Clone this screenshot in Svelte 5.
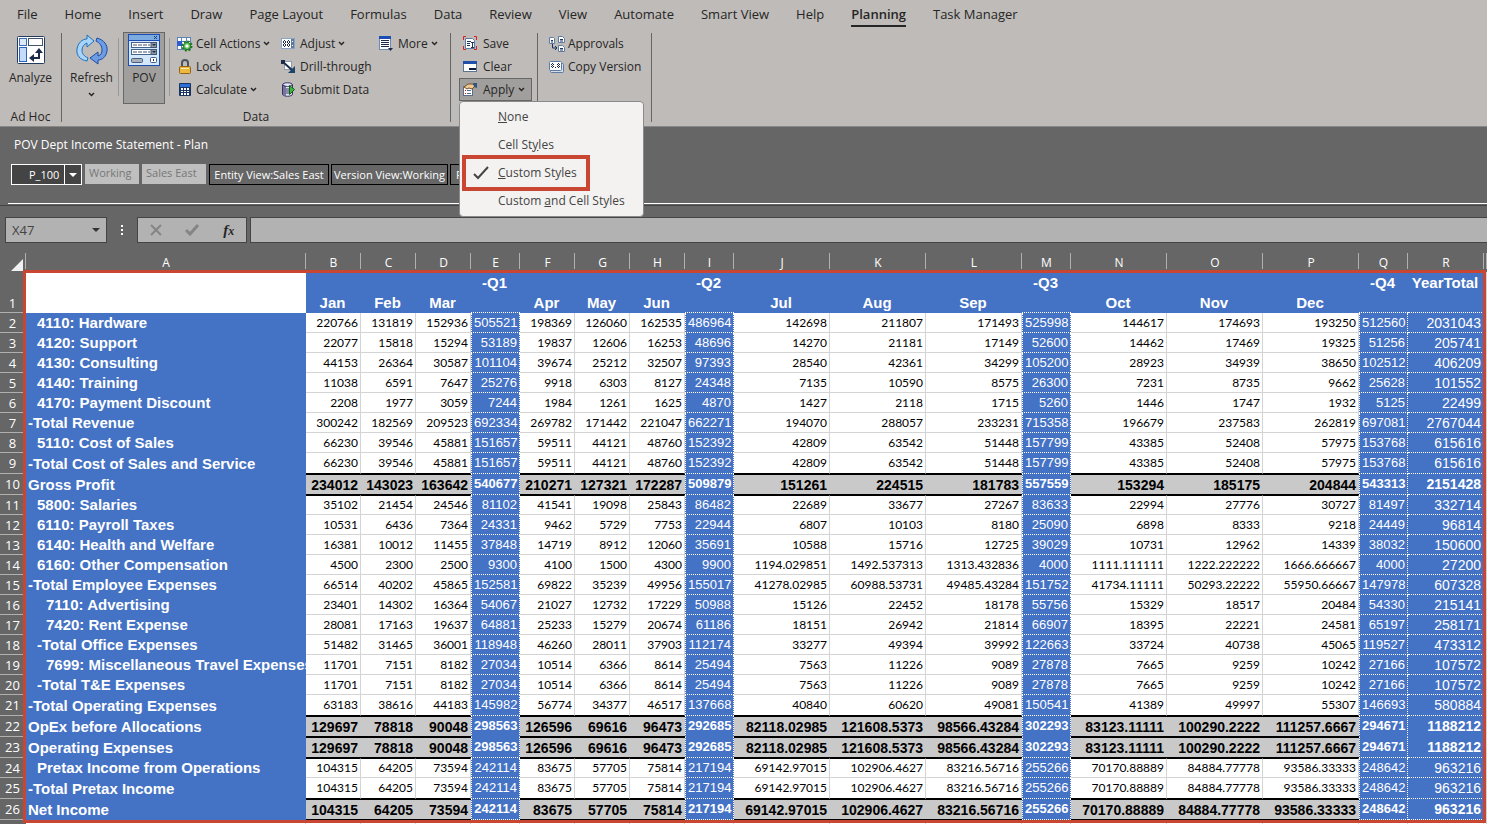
<script>
    const tabs = ['File', 'Home', 'Insert', 'Draw', 'Page Layout', 'Formulas', 'Data', 'Review', 'View', 'Automate', 'Smart View', 'Help', 'Planning', 'Task Manager'];
    let activeTab = 'Planning';
    let style = 'Custom Styles';
    let member = 'P_100';
    let cellRef = 'X47';
    let formula = '';

    const menu = [
        { name: 'None', before: '', key: 'N', after: 'one' },
        { name: 'Cell Styles', before: 'Cell St', key: 'y', after: 'les' },
        { name: 'Custom Styles', before: '', key: 'C', after: 'ustom Styles' },
        { name: 'Custom and Cell Styles', before: 'Custom ', key: 'a', after: 'nd Cell Styles' },
    ];

    const columns = [
        ['B', 'Jan', 'month'], ['C', 'Feb', 'month'], ['D', 'Mar', 'month'], ['E', '-Q1', 'quarter'],
        ['F', 'Apr', 'month'], ['G', 'May', 'month'], ['H', 'Jun', 'month'], ['I', '-Q2', 'quarter'],
        ['J', 'Jul', 'wide'], ['K', 'Aug', 'wide'], ['L', 'Sep', 'wide'], ['M', '-Q3', 'quarter'],
        ['N', 'Oct', 'wide'], ['O', 'Nov', 'wide'], ['P', 'Dec', 'wide'], ['Q', '-Q4', 'quarter'],
        ['R', 'YearTotal', 'year'],
    ].map(([letter, title, kind]) => ({ letter, title, kind }));

    // indent, label, values, and a flag for the highlighted total rows
    const rows = [
        [1, '4110: Hardware', '220766 131819 152936 505521 198369 126060 162535 486964 142698 211807 171493 525998 144617 174693 193250 512560 2031043'],
        [1, '4120: Support', '22077 15818 15294 53189 19837 12606 16253 48696 14270 21181 17149 52600 14462 17469 19325 51256 205741'],
        [1, '4130: Consulting', '44153 26364 30587 101104 39674 25212 32507 97393 28540 42361 34299 105200 28923 34939 38650 102512 406209'],
        [1, '4140: Training', '11038 6591 7647 25276 9918 6303 8127 24348 7135 10590 8575 26300 7231 8735 9662 25628 101552'],
        [1, '4170: Payment Discount', '2208 1977 3059 7244 1984 1261 1625 4870 1427 2118 1715 5260 1446 1747 1932 5125 22499'],
        [0, '-Total Revenue', '300242 182569 209523 692334 269782 171442 221047 662271 194070 288057 233231 715358 196679 237583 262819 697081 2767044'],
        [1, '5110: Cost of Sales', '66230 39546 45881 151657 59511 44121 48760 152392 42809 63542 51448 157799 43385 52408 57975 153768 615616'],
        [0, '-Total Cost of Sales and Service', '66230 39546 45881 151657 59511 44121 48760 152392 42809 63542 51448 157799 43385 52408 57975 153768 615616'],
        [0, 'Gross Profit', '234012 143023 163642 540677 210271 127321 172287 509879 151261 224515 181783 557559 153294 185175 204844 543313 2151428', true],
        [1, '5800: Salaries', '35102 21454 24546 81102 41541 19098 25843 86482 22689 33677 27267 83633 22994 27776 30727 81497 332714'],
        [1, '6110: Payroll Taxes', '10531 6436 7364 24331 9462 5729 7753 22944 6807 10103 8180 25090 6898 8333 9218 24449 96814'],
        [1, '6140: Health and Welfare', '16381 10012 11455 37848 14719 8912 12060 35691 10588 15716 12725 39029 10731 12962 14339 38032 150600'],
        [1, '6160: Other Compensation', '4500 2300 2500 9300 4100 1500 4300 9900 1194.029851 1492.537313 1313.432836 4000 1111.111111 1222.222222 1666.666667 4000 27200'],
        [0, '-Total Employee Expenses', '66514 40202 45865 152581 69822 35239 49956 155017 41278.02985 60988.53731 49485.43284 151752 41734.11111 50293.22222 55950.66667 147978 607328'],
        [2, '7110: Advertising', '23401 14302 16364 54067 21027 12732 17229 50988 15126 22452 18178 55756 15329 18517 20484 54330 215141'],
        [2, '7420: Rent Expense', '28081 17163 19637 64881 25233 15279 20674 61186 18151 26942 21814 66907 18395 22221 24581 65197 258171'],
        [1, '-Total Office Expenses', '51482 31465 36001 118948 46260 28011 37903 112174 33277 49394 39992 122663 33724 40738 45065 119527 473312'],
        [2, '7699: Miscellaneous Travel Expenses', '11701 7151 8182 27034 10514 6366 8614 25494 7563 11226 9089 27878 7665 9259 10242 27166 107572'],
        [1, '-Total T&E Expenses', '11701 7151 8182 27034 10514 6366 8614 25494 7563 11226 9089 27878 7665 9259 10242 27166 107572'],
        [0, '-Total Operating Expenses', '63183 38616 44183 145982 56774 34377 46517 137668 40840 60620 49081 150541 41389 49997 55307 146693 580884'],
        [0, 'OpEx before Allocations', '129697 78818 90048 298563 126596 69616 96473 292685 82118.02985 121608.5373 98566.43284 302293 83123.11111 100290.2222 111257.6667 294671 1188212', true],
        [0, 'Operating Expenses', '129697 78818 90048 298563 126596 69616 96473 292685 82118.02985 121608.5373 98566.43284 302293 83123.11111 100290.2222 111257.6667 294671 1188212', true],
        [1, 'Pretax Income from Operations', '104315 64205 73594 242114 83675 57705 75814 217194 69142.97015 102906.4627 83216.56716 255266 70170.88889 84884.77778 93586.33333 248642 963216'],
        [0, '-Total Pretax Income', '104315 64205 73594 242114 83675 57705 75814 217194 69142.97015 102906.4627 83216.56716 255266 70170.88889 84884.77778 93586.33333 248642 963216'],
        [0, 'Net Income', '104315 64205 73594 242114 83675 57705 75814 217194 69142.97015 102906.4627 83216.56716 255266 70170.88889 84884.77778 93586.33333 248642 963216', true],
    ].map(([indent, label, values, total]) => ({ indent, label, values: values.split(' '), total }));
</script>

<div class="app">
    <header class="ribbon">
        <nav class="tabs">
            {#each tabs as tab}
                <button class="tab" class:active={tab === activeTab} on:click={() => (activeTab = tab)}>{tab}</button>
            {/each}
        </nav>
        <div class="groups">
            <section class="group adhoc">
                <div class="tools">
                    <button class="big">
                        <svg width="32" height="32" viewBox="0 0 32 32">
                            <rect x="2.500" y="2.500" width="27" height="27" rx="1" fill="#fff" stroke="#263a5c" />
                            <rect x="4.500" y="4.500" width="7" height="7" fill="#dce9fb" stroke="#3c6cb8" />
                            <rect x="13.500" y="4.500" width="14" height="7" fill="#fff" stroke="#44546c" />
                            <rect x="4.500" y="13.500" width="7" height="14" fill="#c4dcfa" stroke="#2c62c0" />
                            <path d="M24 17v7h-7" fill="none" stroke="#1c2c48" stroke-width="2" />
                            <path d="M20 19l4-5 4 5zM19 20l-5 4 5 4z" fill="#1c2c48" />
                        </svg>
                        <span>Analyze</span>
                    </button>
                </div>
                <h2>Ad Hoc</h2>
            </section>
            <section class="group data">
                <div class="tools">
                    <button class="big refresh">
                        <svg width="32" height="32" viewBox="0 0 32 32">
                            <path d="M11 27C4 26 0 21 1 15 2 9 6 5 11 5V1l7 6-7 6V9c-3 1-5 4-5 7 0 4 2 6 6 8z" fill="#a8d4f8" stroke="#1c70c0" />
                            <path d="M21 4c7 2 11 7 10 13-1 6-5 9-9 9v4l-8-6 8-6v4c3-1 4-3 4-6 0-4-2-7-6-9z" fill="#6c9ce4" stroke="#1c4ca4" />
                        </svg>
                        <span>Refresh</span>
                        <svg class="caret" width="7" height="5" viewBox="0 0 7 5"><path d="M1 1l2.500 2.500L6 1" /></svg>
                    </button>
                    <i class="line"></i>
                    <button class="big pressed">
                        <svg width="32" height="32" viewBox="0 0 32 32">
                            <rect x=".5" y=".5" width="31" height="31" fill="#d4e8fc" stroke="#1c4cb4" />
                            <path d="M1 1h30v5H1z" fill="#7cacdf" />
                            <path d="M1 6.500h30" stroke="#1c4cb4" />
                            <path d="M26 2l3 3m0-3l-3 3" stroke="#1c3c74" />
                            <rect x="3.500" y="8.500" width="25" height="5" fill="#fff" stroke="#44648c" />
                            <rect x="3.500" y="15.500" width="25" height="5" fill="#fff" stroke="#44648c" />
                            <path d="M23 8.500h5.500v5H23zM23 15.500h5.500v5H23z" fill="#8c98a8" stroke="#44546c" />
                            <path d="M5 11h17M5 18h17" stroke="#44546c" stroke-dasharray="4 1" />
                            <path d="M24 10h4l-2 2zM24 17h4l-2 2z" fill="#1c2c48" />
                            <rect x="3.500" y="24.500" width="11" height="4" rx="1" fill="#a8b0b8" stroke="#445c84" />
                            <rect x="22.500" y="23.500" width="6" height="5" rx="1" fill="#fff" stroke="#445c84" />
                            <path d="M25.500 25v2" stroke="#1c2c48" />
                        </svg>
                        <span>POV</span>
                    </button>
                    <i class="line"></i>
                    <div class="stack first">
                        <button class="small">
                            <svg width="16" height="16" viewBox="0 0 16 16">
                                <rect x=".5" y="1.500" width="13" height="12" fill="#fff" stroke="#5c84b8" />
                                <path d="M4.500 1v13M9.500 1v13M0 5.500h14M0 9.500h14" stroke="#5c84b8" />
                                <path d="M0 5h5v5H0z" fill="#2c5cd0" />
                                <circle cx="10" cy="10" r="4.500" fill="none" stroke="#187818" stroke-width="2" stroke-dasharray="2 1.500" />
                                <circle cx="10" cy="10" r="3.500" fill="#7ccc74" stroke="#187818" />
                                <circle cx="10" cy="10" r="1.500" fill="#fff" />
                            </svg>
                            Cell Actions
                            <svg class="caret" width="7" height="5" viewBox="0 0 7 5"><path d="M1 1l2.500 2.500L6 1" /></svg>
                        </button>
                        <button class="small">
                            <svg width="16" height="16" viewBox="0 0 16 16">
                                <path d="M5 8V4c0-4 6-4 6 0v4" fill="none" stroke="#4c5460" stroke-width="2" />
                                <rect x="2.500" y="7.500" width="11" height="7" rx="1" fill="#ecb840" stroke="#946414" />
                                <path d="M4 9.500h8" stroke="#fcecac" />
                            </svg>
                            Lock
                        </button>
                        <button class="small">
                            <svg width="16" height="16" viewBox="0 0 16 16">
                                <rect x="2" y="1" width="12" height="13" rx="1" fill="#1c3460" />
                                <path d="M3 2h10v3H3z" fill="#2c70dc" />
                                <path d="M4 6h2v2H4zM7 6h2v2H7zM10 6h2v2h-2zM4 9h2v1H4zM7 9h2v1H7zM10 9h2v1h-2zM4 11h2v2H4zM7 11h2v2H7zM10 11h2v2h-2z" fill="#fff" />
                            </svg>
                            Calculate
                            <svg class="caret" width="7" height="5" viewBox="0 0 7 5"><path d="M1 1l2.500 2.500L6 1" /></svg>
                        </button>
                    </div>
                    <div class="stack second">
                        <button class="small">
                            <svg width="16" height="16" viewBox="0 0 16 16">
                                <rect x=".5" y="2.500" width="13" height="10" fill="#fff" stroke="#8ca4c4" />
                                <path d="M10 3h3v9h-3z" fill="#5c7c9c" />
                                <path d="M3 4h1v1H3zM2 5h1v2H2zM4 5h1v2H4zM3 7h1v1H3zM2 8h1v2H2zM4 8h1v2H4zM3 10h1v1H3zM7 4h1v1H7zM6 5h1v2H6zM8 5h1v2H8zM7 7h1v1H7zM6 8h1v2H6zM8 8h1v2H8zM7 10h1v1H7z" fill="#1c2c48" />
                                <path d="M11 5h1v1h-1zM11 9h1v1h-1z" fill="#fff" />
                            </svg>
                            Adjust
                            <svg class="caret" width="7" height="5" viewBox="0 0 7 5"><path d="M1 1l2.500 2.500L6 1" /></svg>
                        </button>
                        <button class="small">
                            <svg width="16" height="16" viewBox="0 0 16 16">
                                <rect x="3.500" y="2.500" width="7" height="8" fill="#fff" stroke="#8c9cb4" />
                                <path d="M0 1h4v4H0z" fill="#1c2c48" />
                                <path d="M2 3l9 8" stroke="#1c2c48" stroke-width="2" />
                                <path d="M14 7v7H7z" fill="#1c4468" />
                            </svg>
                            Drill-through
                        </button>
                        <button class="small">
                            <svg width="16" height="16" viewBox="0 0 16 16">
                                <path d="M1.500 3c0-3 10-3 10 0v9c0 3-10 3-10 0z" fill="#e4e4f0" stroke="#343464" />
                                <path d="M2 3v9c0 1 1 2 3 2V4z" fill="#74749c" />
                                <path d="M2 3c2 2 7 2 9 0M5 7h4M5 9h4M5 11h4" fill="none" stroke="#343464" />
                                <path d="M8.500 3.500l5 4-5 5z" fill="#3cb83c" stroke="#105c18" />
                            </svg>
                            Submit Data
                        </button>
                    </div>
                    <div class="stack third">
                        <button class="small">
                            <svg width="16" height="16" viewBox="0 0 16 16">
                                <rect x=".5" y="1.500" width="11" height="12" fill="#fff" stroke="#6c8cb4" />
                                <path d="M0 0h12v3H0z" fill="#1c4cb4" />
                                <path d="M2 4.500h8M2 6.500h8M2 8.500h8M2 10.500h8" stroke="#1c2c48" />
                                <path d="M9 12h5l-2.500 3z" fill="#1c2c48" />
                            </svg>
                            More
                            <svg class="caret" width="7" height="5" viewBox="0 0 7 5"><path d="M1 1l2.500 2.500L6 1" /></svg>
                        </button>
                    </div>
                </div>
                <h2>Data</h2>
            </section>
            <section class="group styles">
                <div class="tools">
                    <div class="stack">
                        <button class="small">
                            <svg width="16" height="16" viewBox="0 0 16 16">
                                <path d="M2.500 2.500h7l2 2v8h-9z" fill="#fff" stroke="#5c7ca4" />
                                <path d="M4 5.500h4M4 7.500h3M4 9.500h3M8 6.500h3M8 11.500h3M9.500 7v4" stroke="#1c3460" />
                                <path d="M.5 4V.5H3M11 .5h2.500V4M.5 10v3.500H3M11 13.500h2.500V10" fill="none" stroke="#d82020" />
                            </svg>
                            Save
                        </button>
                        <button class="small">
                            <svg width="16" height="16" viewBox="0 0 16 16">
                                <rect x=".5" y="2.500" width="13" height="10" fill="#fff" stroke="#5c7490" />
                                <path d="M0 2h14v3H0z" fill="#2050ac" />
                                <path d="M6 9h7v2H6z" fill="#0c1c3c" />
                            </svg>
                            Clear
                        </button>
                        <div class="dropdown">
                            <button class="small pressed" aria-haspopup="menu">
                                <svg width="16" height="16" viewBox="0 0 16 16">
                                    <rect x=".5" y="4.500" width="9" height="9" fill="#fff" stroke="#5c6c8c" />
                                    <path d="M4 8.500h4M4 11.500h4" stroke="#5c6c8c" />
                                    <path d="M2 8h1v1H2zM2 11h1v1H2z" fill="#d82020" />
                                    <path d="M1 5l4-3h5l2 2-3 3-3-1-2 1z" fill="#f0c890" stroke="#6c5030" />
                                    <path d="M10 1h4v5l-3-1z" fill="#345480" />
                                </svg>
                                Apply
                                <svg class="caret" width="7" height="5" viewBox="0 0 7 5"><path d="M1 1l2.500 2.500L6 1" /></svg>
                            </button>
                            <div class="menu" role="menu">
                                {#each menu as item}
                                    <button class="item" class:checked={item.name === style} role="menuitemradio" aria-checked={item.name === style} on:click={() => (style = item.name)}>
                                        <span class="check">
                                            {#if item.name === style}
                                                <svg width="18" height="14" viewBox="0 0 18 14"><path d="M2 8l4 4L16 1" fill="none" stroke="#444" stroke-width="2" /></svg>
                                            {/if}
                                        </span>
                                        <span>{item.before}<u>{item.key}</u>{item.after}</span>
                                    </button>
                                {/each}
                            </div>
                        </div>
                    </div>
                </div>
            </section>
            <section class="group approvals">
                <div class="tools">
                    <div class="stack">
                        <button class="small">
                            <svg width="16" height="16" viewBox="0 0 16 16">
                                <path d="M.5 1.500h4l1 1v5h-5zM9.500.5h4l2 2v4h-6zM9.500 9.500h4l2 2v4h-6z" fill="#fff" stroke="#5c7ca4" />
                                <path d="M2 4.500h2M2 6h2M11 3.500h3M11 5h3M11 12.500h3M11 14h3M3.500 8v4H8M6 10l2 2-2 2" fill="none" stroke="#1c3460" />
                            </svg>
                            Approvals
                        </button>
                        <button class="small">
                            <svg width="16" height="16" viewBox="0 0 16 16">
                                <rect x="1.500" y="4.500" width="13" height="9" rx="1" fill="#d4dce8" stroke="#5c7ca4" />
                                <rect x=".5" y="2.500" width="12" height="9" rx="1" fill="#fff" stroke="#5c7ca4" />
                                <path d="M3 4h1v1H3zM2 5h1v1H2zM4 5h1v1H4zM3 6h1v1H3zM2 7h1v1H2zM4 7h1v1H4zM3 8h1v1H3zM9 4h1v1H9zM8 5h1v1H8zM10 5h1v1h-1zM9 6h1v1H9zM8 7h1v1H8zM10 7h1v1h-1zM9 8h1v1H9zM6 8h1v1H6z" fill="#1c2c48" />
                            </svg>
                            Copy Version
                        </button>
                    </div>
                </div>
            </section>
        </div>
    </header>

    <section class="pov">
        <h1>POV Dept Income Statement - Plan</h1>
        <div class="members">
            <label class="picker">
                <select bind:value={member} aria-label="Product">
                    <option>P_100</option>
                </select>
                <svg width="8" height="4" viewBox="0 0 8 4"><path d="M0 0h8L4 4z" fill="#fff" /></svg>
            </label>
            <button class="fixed working" disabled>Working</button>
            <button class="fixed east" disabled>Sales East</button>
            <button class="variable entity">Entity View:Sales East</button>
            <button class="variable version">Version View:Working</button>
            <button class="variable rest">R</button>
        </div>
    </section>

    <div class="formula-bar">
        <label class="name-box">
            <input bind:value={cellRef} aria-label="Name box">
            <svg width="8" height="4" viewBox="0 0 8 4"><path d="M0 0h8L4 4z" fill="#333" /></svg>
        </label>
        <svg class="dots" width="4" height="12" viewBox="0 0 4 12"><path d="M1 1h2v2H1zM1 5h2v2H1zM1 9h2v2H1z" fill="#fff" /></svg>
        <div class="entry">
            <button aria-label="Cancel"><svg width="12" height="12" viewBox="0 0 12 12"><path d="M1 1l10 10M11 1L1 11" fill="none" stroke="#858585" stroke-width="2" /></svg></button>
            <button aria-label="Enter"><svg width="14" height="12" viewBox="0 0 14 12"><path d="M1 6l4 4 8-9" fill="none" stroke="#858585" stroke-width="3" /></svg></button>
            <button class="fx">f<small>x</small></button>
        </div>
        <input class="formula" bind:value={formula} aria-label="Formula">
    </div>

    <main class="sheet">
        <table>
            <colgroup>
                <col class="c-num">
                <col class="c-label">
                {#each columns as column}
                    <col class="c-{column.kind}">
                {/each}
                <col>
            </colgroup>
            <thead>
                <tr class="letters">
                    <th class="corner"><svg width="12" height="12" viewBox="0 0 12 12"><path d="M12 0v12H0z" fill="#f0f0f0" /></svg></th>
                    <th>A</th>
                    {#each columns as column}
                        <th>{column.letter}</th>
                    {/each}
                    <th></th>
                </tr>
                <tr class="titles">
                    <th class="num">1</th>
                    <th class="blank"></th>
                    {#each columns as column}
                        <th class="title {column.kind}">{column.title}</th>
                    {/each}
                    <td></td>
                </tr>
            </thead>
            <tbody>
                {#each rows as row, index}
                    <tr class:total={row.total}>
                        <th class="num">{index + 2}</th>
                        <th class="label indent{row.indent}">{row.label}</th>
                        {#each row.values as value, i}
                            <td class={columns[i].kind}>{value}</td>
                        {/each}
                        <td></td>
                    </tr>
                {/each}
                <tr class="empty">
                    <th class="num"></th>
                    <td></td>
                    {#each columns as column}
                        <td></td>
                    {/each}
                    <td></td>
                </tr>
            </tbody>
        </table>
        <div class="outline"></div>
    </main>
</div>

<style>
    :global(body) {
        background: #666;
    }
    .app {
        display: flex;
        flex-direction: column;
        height: 100vh;
        overflow: hidden;
        font-family: "Open Sans", "Noto Sans", sans-serif;
        font-size: 12px;
        line-height: 16px;
        color: #262626;
    }
    button, input, select {
        font: inherit;
        color: inherit;
        background: none;
        border: none;
        border-radius: 0;
        padding: 0;
        margin: 0;
        box-sizing: border-box;
        white-space: nowrap;
    }
    h1, h2 {
        margin: 0;
        font-size: 12px;
        font-weight: 400;
    }
    svg {
        flex: none;
    }
    .caret {
        fill: none;
        stroke: #262626;
        stroke-width: 1.5;
    }
    .ribbon {
        background: #bfbbb8;
    }
    .tabs {
        display: flex;
        gap: 27px;
        padding: 5px 17px 0;
        font-size: 13px;
    }
    .tab {
        height: 22px;
        padding-bottom: 2px;
        border-bottom: 2px solid transparent;
    }
    .tab.active {
        font-weight: 600;
        border-bottom-color: #262626;
    }
    .groups {
        display: flex;
        height: 94px;
        padding: 5px 0 0;
    }
    .group {
        display: flex;
        flex-direction: column;
        justify-content: space-between;
        box-sizing: border-box;
        height: 89px;
        margin-top: 1px;
        border-right: 1px solid #666;
    }
    .group h2 {
        text-align: center;
        line-height: 10px;
    }
    .adhoc {
        width: 62px;
    }
    .data {
        width: 389px;
    }
    .styles {
        width: 87px;
        padding-left: 8px;
    }
    .approvals {
        width: 114px;
        padding-left: 7px;
    }
    .tools {
        display: flex;
        height: 72px;
        margin-top: -1px;
    }
    .big {
        display: flex;
        flex-direction: column;
        align-items: center;
        gap: 4px;
        width: 56px;
        padding-top: 2px;
    }
    .adhoc .big {
        width: 61px;
    }
    .big.refresh {
        padding-left: 3px;
    }
    .big .caret {
        margin-top: 2px;
    }
    .big.pressed {
        width: 42px;
        margin: 0 4px;
    }
    .pressed {
        background: #a19f9d;
        border: 1px solid #666;
    }
    .big.pressed {
        padding-top: 1px;
    }
    .line {
        width: 1px;
        margin: 6px 0 8px;
        background: #999;
    }
    .stack {
        display: flex;
        flex-direction: column;
        align-items: flex-start;
    }
    .first {
        width: 104px;
        padding-left: 3px;
    }
    .second {
        width: 98px;
    }
    .small {
        display: flex;
        align-items: center;
        gap: 3px;
        height: 23px;
        padding: 0 4px;
    }
    .styles .small {
        gap: 4px;
    }
    .small.pressed {
        padding: 0 6px 0 3px;
    }
    .dropdown {
        position: relative;
    }
    .menu {
        position: absolute;
        z-index: 2;
        top: 23px;
        left: 0;
        width: 185px;
        box-sizing: border-box;
        padding: 1px 0;
        border: 1px solid #8a8a8a;
        border-radius: 4px;
        background: #f3f2f1;
        color: #444;
    }
    .item {
        position: relative;
        display: flex;
        align-items: center;
        width: 100%;
        height: 28px;
    }
    .check {
        display: flex;
        width: 26px;
        padding-left: 12px;
    }
    .item.checked::after {
        content: "";
        position: absolute;
        inset: -4px 53px -4px 2px;
        border: 4px solid #c84632;
    }
    .pov {
        height: 80px;
        box-sizing: border-box;
        padding: 10px 0 0 8px;
        border-top: 1px solid #888;
        border-bottom: 1px solid #444;
        color: #fff;
    }
    h1 {
        padding-left: 6px;
        font-weight: 500;
    }
    .members {
        display: flex;
        align-items: flex-start;
        gap: 3px;
        height: 51px;
        box-sizing: border-box;
        padding: 11px 0 0 3px;
        border-bottom: 1px solid #fff;
        font-size: 11px;
    }
    .picker {
        display: flex;
        align-items: center;
        width: 71px;
        height: 21px;
        box-sizing: border-box;
        border: 1px solid #fff;
        background: #444;
    }
    .picker select {
        appearance: none;
        width: 53px;
        height: 19px;
        padding-left: 17px;
        border-right: 1px solid #fff;
    }
    .picker svg {
        margin-left: 4px;
    }
    .fixed {
        height: 20px;
        padding: 0 4px 2px;
        background: #bfbfbf;
        color: #777;
        text-align: left;
    }
    .working {
        width: 54px;
    }
    .east {
        width: 64px;
    }
    .variable {
        height: 21px;
        border: 1px solid #000;
    }
    .entity {
        width: 120px;
    }
    .version {
        width: 117px;
        margin-left: -1px;
    }
    .rest {
        width: 117px;
        padding-left: 5px;
        margin-left: -1px;
        text-align: left;
    }
    .formula-bar {
        display: flex;
        align-items: center;
        height: 46px;
        box-sizing: border-box;
        padding: 10px 0 8px 5px;
    }
    .name-box, .entry, .formula {
        display: flex;
        align-items: center;
        box-sizing: border-box;
        height: 26px;
        border: 1px solid #444;
        background: #b2b2b2;
    }
    .name-box {
        width: 102px;
    }
    .name-box input {
        width: 80px;
        padding-left: 6px;
        margin-right: 6px;
        font-size: 13px;
        color: #444;
    }
    .dots {
        margin: 0 13px 0 13px;
    }
    .entry {
        width: 110px;
        justify-content: space-around;
        margin-right: 3px;
    }
    .entry button {
        display: flex;
        align-items: baseline;
    }
    .entry .fx {
        font: italic 700 15px "Liberation Serif", serif;
    }
    .fx small {
        font-size: 12px;
    }
    .formula {
        flex: 1;
        min-width: 0;
        border-right: none;
        padding: 0 6px;
    }
    .sheet {
        position: relative;
        flex: 1;
        overflow: hidden;
    }
    table {
        table-layout: fixed;
        width: 100%;
        border-spacing: 0;
        background: #fff;
    }
    .c-num {
        width: 26px;
    }
    .c-label {
        width: 280px;
    }
    .c-month {
        width: 55px;
    }
    .c-quarter {
        width: 49px;
    }
    .c-wide {
        width: 96px;
    }
    .c-year {
        width: 76px;
    }
    th, td {
        box-sizing: border-box;
        height: 20px;
        padding: 0 2px;
        overflow: hidden;
        white-space: nowrap;
        line-height: 18px;
    }
    td {
        border-right: 1px solid #d4d4d4;
        border-bottom: 1px solid #d4d4d4;
        font-family: Lato, sans-serif;
        text-align: right;
        color: #000;
    }
    .letters th {
        padding-top: 2px;
        background: linear-gradient(#b0b0b0, #b0b0b0) right 0 top 1px / 1px 16px no-repeat #666;
        font-weight: 400;
        color: #fff;
    }
    .letters .corner {
        padding: 5px 3px 0 0;
        line-height: 0;
        text-align: right;
    }
    .num {
        padding: 0 1px 0 0;
        border-bottom: 1px solid #b0b0b0;
        background: #666;
        font-size: 13px;
        font-weight: 400;
        color: #fff;
    }
    .titles th {
        height: 41px;
        vertical-align: bottom;
    }
    .blank {
        background: #fff;
    }
    .title {
        padding: 0 2px 1px 0;
        background: #4472c4;
        font-family: "Liberation Sans", Arial, sans-serif;
        font-size: 15px;
        color: #fff;
    }
    .titles .quarter, .titles .year {
        padding-top: 2px;
        border-bottom: 1px dotted #fff;
        vertical-align: top;
    }
    .label {
        padding: 0 0 0 2px;
        background: #4472c4;
        font-family: "Liberation Sans", Arial, sans-serif;
        font-size: 15px;
        text-align: left;
        color: #fff;
    }
    .indent1 {
        padding-left: 11px;
    }
    .indent2 {
        padding-left: 20px;
    }
    td.quarter, td.year {
        background: #4472c4;
        border-right: 1px dotted #fff;
        border-bottom: 1px dotted #fff;
        font-family: "Liberation Sans", Arial, sans-serif;
        font-size: 13px;
        color: #fff;
    }
    td.quarter {
        border-left: 1px dotted #fff;
    }
    td.year {
        font-size: 14px;
    }
    .total th, .total td, tr:has(+ .total) th, tr:has(+ .total) td {
        height: 21px;
    }
    .total td {
        font-weight: 700;
    }
    .total .month, .total .wide {
        border-right: none;
        padding-right: 3px;
        border-top: 1px solid #000;
        border-bottom: 1px solid #000;
        background: #c9c9c9;
        font-family: "Liberation Sans", Arial, sans-serif;
        font-size: 14px;
    }
    tr:has(+ .total) .month, tr:has(+ .total) .wide {
        border-bottom-color: #000;
    }
    .total + tr .month, .total + tr .wide {
        border-top: 1px solid #000;
    }
    .total:has(+ .total) .quarter, .total:has(+ .total) .year {
        border-bottom-color: #4472c4;
    }
    .outline {
        position: absolute;
        top: 18px;
        left: 23px;
        right: 1px;
        bottom: 1px;
        border: 3px solid #c84632;
    }
</style>
